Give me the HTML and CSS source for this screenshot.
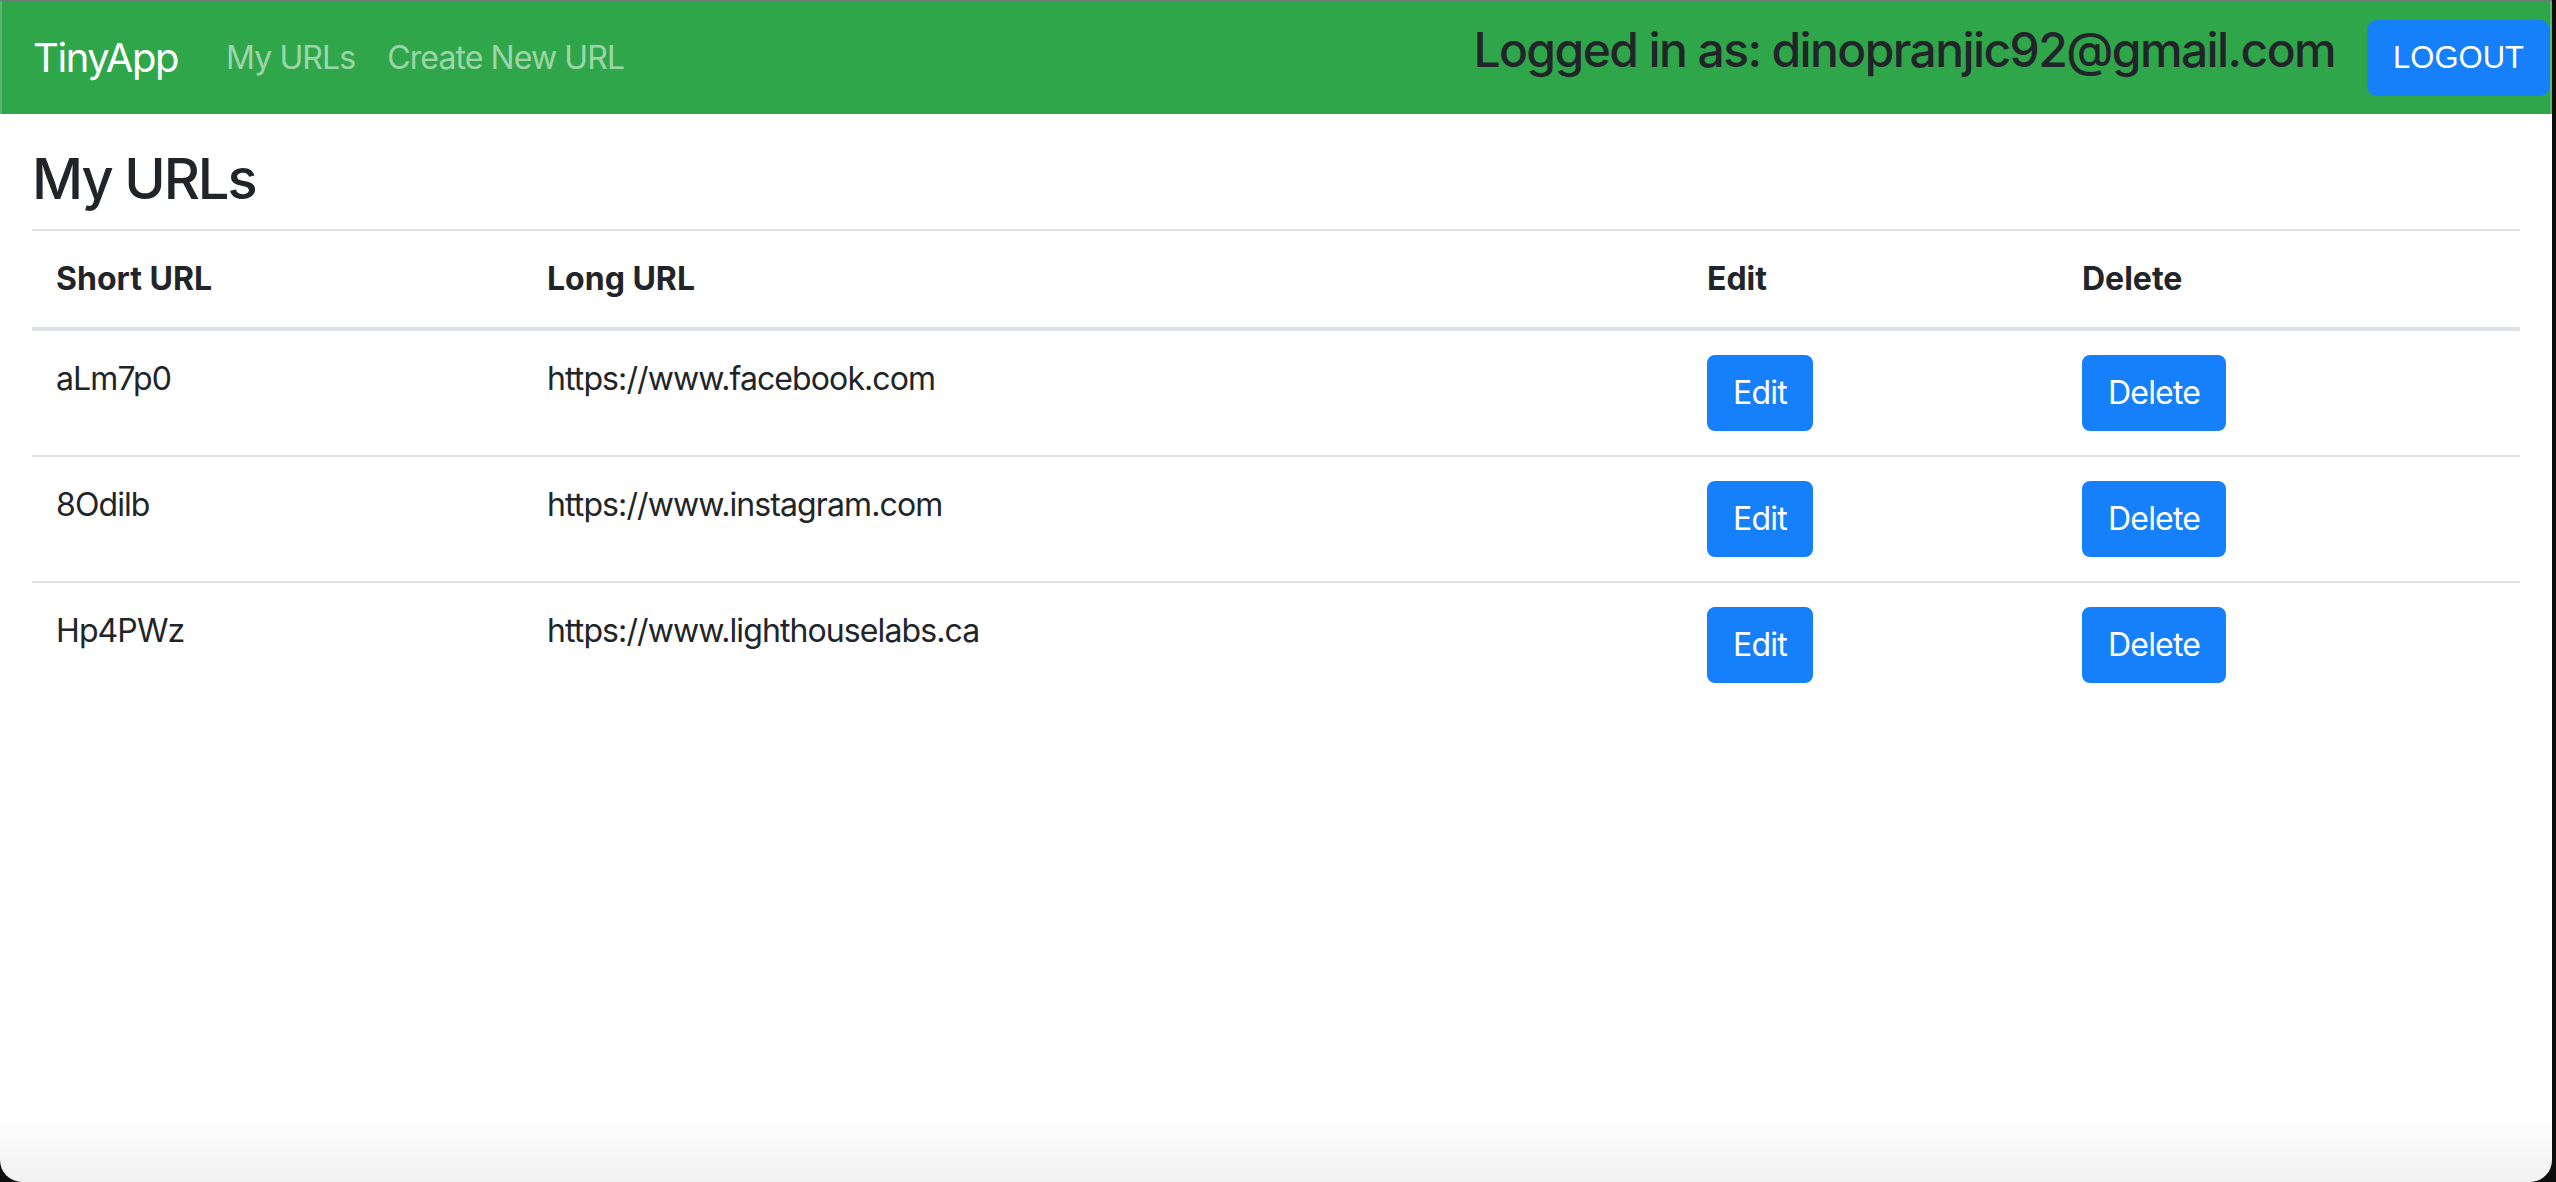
FILE: index.html
```html
<!DOCTYPE html>
<html lang="en">
<head>
<meta charset="utf-8">
<title>TinyApp</title>
<link rel="stylesheet" href="styles.css">
</head>
<body>
<div class="window">
  <nav class="navbar">
    <div class="nav-left">
      <a class="brand" href="#">TinyApp</a>
      <a class="nav-link" href="#">My URLs</a>
      <a class="nav-link" href="#">Create New URL</a>
    </div>
    <form class="nav-right">
      <h4 class="logged">Logged in as: dinopranjic92@gmail.com</h4>
      <button class="btn-logout" type="button">LOGOUT</button>
    </form>
  </nav>
  <main class="main">
    <h3 class="page-title">My URLs</h3>
    <table class="table">
      <colgroup>
        <col class="c-short">
        <col class="c-long">
        <col class="c-edit">
        <col class="c-del">
      </colgroup>
      <thead>
        <tr>
          <th>Short URL</th>
          <th>Long URL</th>
          <th>Edit</th>
          <th>Delete</th>
        </tr>
      </thead>
      <tbody>
        <tr>
          <td>aLm7p0</td>
          <td>https://www.facebook.com</td>
          <td><button class="btn" type="button">Edit</button></td>
          <td><button class="btn" type="button">Delete</button></td>
        </tr>
        <tr>
          <td>8Odilb</td>
          <td>https://www.instagram.com</td>
          <td><button class="btn" type="button">Edit</button></td>
          <td><button class="btn" type="button">Delete</button></td>
        </tr>
        <tr>
          <td>Hp4PWz</td>
          <td>https://www.lighthouselabs.ca</td>
          <td><button class="btn" type="button">Edit</button></td>
          <td><button class="btn" type="button">Delete</button></td>
        </tr>
      </tbody>
    </table>
  </main>
</div>
</body>
</html>
```

FILE: styles.css
```css
* { box-sizing: border-box; }

html, body {
  margin: 0;
  padding: 0;
  height: 100%;
  overflow: hidden;
}

body {
  background: #0d0d0d;
  font-family: Inter, "Noto Sans", "DejaVu Sans", sans-serif;
  font-size: 32px;
  line-height: 48px;
  color: #212529;
}

.window {
  width: 2552px;
  height: 1182px;
  background: linear-gradient(180deg, #ffffff 0, #ffffff 1115px, #f1f1f1 1182px);
  border-bottom-left-radius: 22px;
  border-bottom-right-radius: 22px;
  overflow: hidden;
}

.navbar {
  height: 114px;
  background: #30a64a;
  border-top: 2px solid #6d7e76;
  border-left: 2px solid #5cb56f;
  border-right: 2px solid #5cb56f;
  padding: 0 0 0 31px;
  display: flex;
  align-items: center;
  justify-content: space-between;
}

.nav-left {
  display: flex;
  align-items: center;
}

.brand {
  font-size: 40px;
  line-height: 60px;
  color: #ffffff;
  text-decoration: none;
  margin-right: 32px;
  padding: 10px 0;
  letter-spacing: -1.4px;
}

.nav-link {
  font-size: 32px;
  line-height: 48px;
  padding: 16px;
  color: rgba(255, 255, 255, 0.55);
  text-decoration: none;
  letter-spacing: -0.9px;
}

.nav-right {
  display: flex;
  align-items: center;
  margin: 0;
}

.logged {
  font-size: 48px;
  line-height: 57.6px;
  font-weight: 500;
  margin: 0 32px 16px 0;
  color: #212529;
  letter-spacing: -1.6px;
}

.btn-logout {
  font-family: "Liberation Sans", Arial, sans-serif;
  font-size: 31px;
  line-height: 48px;
  height: 76px;
  padding: 12px 24px;
  background: #1680fb;
  color: #ffffff;
  border: 2px solid #1680fb;
  border-radius: 10px;
}

.main {
  padding: 0 32px;
}

.page-title {
  font-size: 56px;
  line-height: 67.2px;
  font-weight: 500;
  margin: 32px 0 16px 0;
  color: #212529;
  letter-spacing: -2.1px;
}

.table {
  width: 100%;
  border-collapse: collapse;
  table-layout: fixed;
}

.c-short { width: 491px; }
.c-long { width: 1160px; }
.c-edit { width: 375px; }

.table th,
.table td {
  padding: 24px;
  text-align: left;
  border-top: 2px solid #dee2e6;
}

.table th {
  font-weight: 700;
  vertical-align: bottom;
  border-bottom: 4px solid #dee2e6;
}

.table td {
  vertical-align: top;
  font-weight: 400;
  letter-spacing: -0.9px;
}

.btn {
  font-family: Inter, "Noto Sans", sans-serif;
  font-size: 32px;
  line-height: 48px;
  padding: 12px 24px;
  background: #1680fb;
  color: #ffffff;
  border: 2px solid #1680fb;
  border-radius: 8px;
  display: inline-block;
  vertical-align: top;
  letter-spacing: -0.8px;
}
```
